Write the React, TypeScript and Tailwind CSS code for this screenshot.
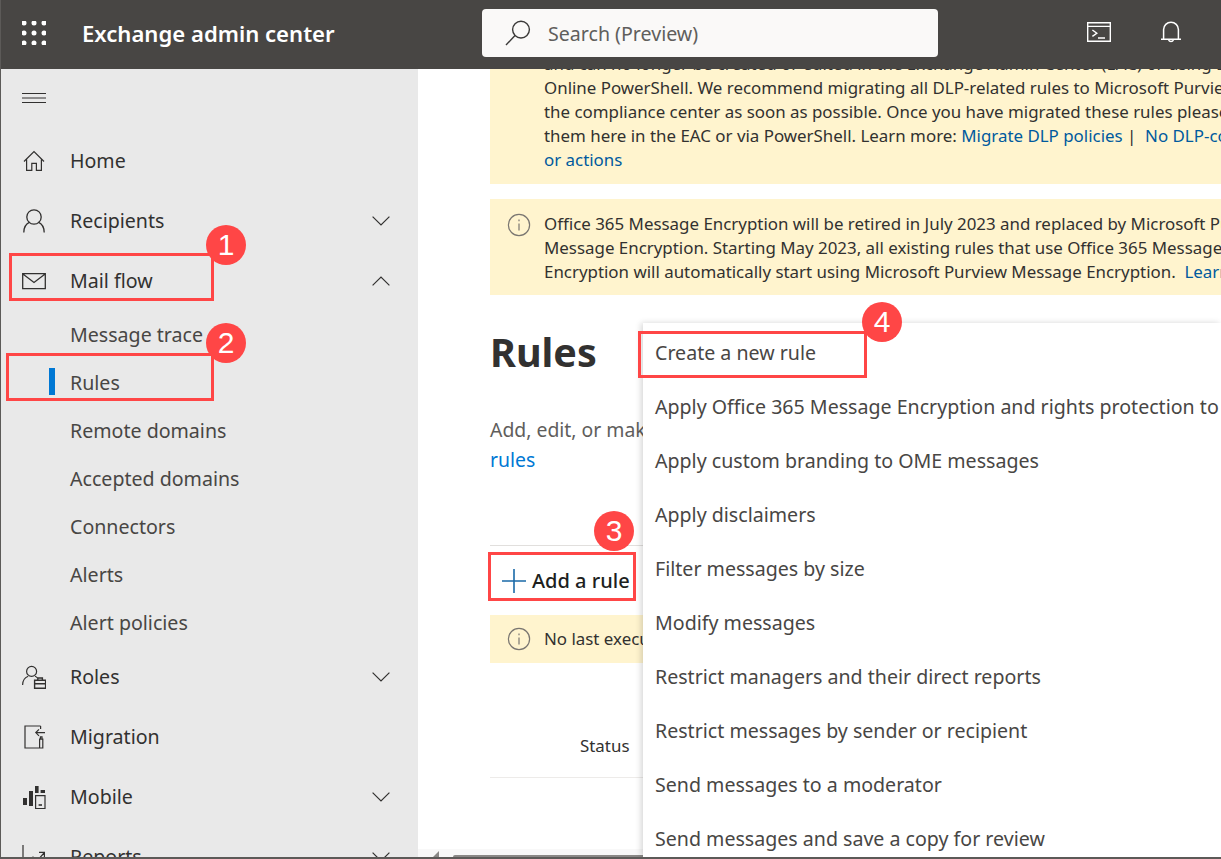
import { ReactNode } from "react";

const ink = "#323130";

// sidebar icons, drawn on a 24 box to match the fluent glyphs
const HomeIcon = () => (
  <svg width="24" height="24" viewBox="0 0 24 24" fill="none" stroke={ink} strokeWidth="1.2">
    <path d="M2 12.5 12 2.6l10 9.9M4.6 10.5V21.4h5.2v-7h4.6v7h5V10.5" />
  </svg>
);
const PersonIcon = () => (
  <svg width="24" height="24" viewBox="0 0 24 24" fill="none" stroke={ink} strokeWidth="1.3">
    <circle cx="12" cy="8" r="7.2" />
    <path d="M1.8 23.6c0-5.6 2.8-9 6-10.4M22.2 23.6c0-5.6-2.8-9-6-10.4" />
  </svg>
);
const MailIcon = () => (
  <svg width="24" height="24" viewBox="0 0 24 24" fill="none" stroke={ink} strokeWidth="1.3">
    <path d="M.7 4.6h22.6v15H.7zM.9 4.9 12 13.4l11.1-8.5" />
  </svg>
);
const RolesIcon = () => (
  <svg width="24" height="24" viewBox="0 0 24 24" fill="none" stroke={ink} strokeWidth="1.2">
    <circle cx="9.6" cy="6.4" r="5" />
    <path d="M.6 20c0-4.6 2.6-7.6 5.6-8.8M13 11.2c1 .4 1.8 1 2.4 1.6" />
    <path d="M12.6 15.2h11v8h-11zM12.6 18.8h11M15.8 15v-2h4.6v2" strokeWidth="1.4" />
  </svg>
);
const MigrationIcon = () => (
  <svg width="24" height="24" viewBox="0 0 24 24" fill="none" stroke={ink} strokeWidth="1.2">
    <path d="M18.6 1H3v22h14" />
    <path d="M18.6 1v3M23 7.6h-9.2M17 4.4l-3.2 3.2L17 10.8" />
    <path d="M18.4 14.2v-2.4h1.6v2.4M17.6 14.2h3.2V23h-3.2z" />
  </svg>
);
const MobileIcon = () => (
  <svg width="24" height="24" viewBox="0 0 24 24" fill="none" stroke={ink} strokeWidth="1.2">
    <path d="M1 13h4v7H1zM7 6h4v15H7zM13 1h3.6v7H13zM18.6 5H23v3h-4.4z" fill={ink} stroke="none" />
    <path d="M13.6 10.6h9.4v13h-9.4z" />
    <path d="M16.6 20h3.4" strokeWidth="1.6" />
  </svg>
);
const ReportsIcon = () => (
  <svg width="24" height="24" viewBox="0 0 24 24" fill="none" stroke={ink} strokeWidth="1.2">
    <path d="M1 0v24h22M5 18l6-6 4 4 7-8M17 7.4h5.4v5.4" />
  </svg>
);
const Chevron = ({ up }: { up?: boolean }) => (
  <svg width="18" height="10" viewBox="0 0 18 10" fill="none" stroke={ink} strokeWidth="1.2">
    <path d={up ? "M.6 9.4 9 1l8.4 8.4" : "M.6.6 9 9 17.4.6"} />
  </svg>
);
const InfoIcon = () => (
  <svg width="24" height="24" viewBox="0 0 24 24" fill="none" stroke="#7a7671" strokeWidth="1.2">
    <circle cx="12" cy="12" r="10.6" />
    <path d="M12 10.4v7M12 6.6v1.6" />
  </svg>
);

const Waffle = () => (
  <svg width="24" height="24" viewBox="0 0 24 24" fill="#fff">
    {[2, 12, 22].flatMap((y) =>
      [2, 12, 22].map((x) => <circle key={`${x}-${y}`} cx={x} cy={y} r="2.5" />)
    )}
  </svg>
);

const NavRow = ({ icon, label, chevron }: { icon: ReactNode; label: string; chevron?: "up" | "down" }) => (
  <div className="flex h-[60px] items-center pl-[21px] pr-[28px]">
    <span className="flex w-[48px] shrink-0">{icon}</span>
    <span className="flex-1">{label}</span>
    {chevron && <Chevron up={chevron === "up"} />}
  </div>
);

const SubRow = ({ label, active }: { label: string; active?: boolean }) => (
  <div className="relative flex h-12 items-center pl-[69px] text-[#484644]">
    {active && <span className="absolute left-[48px] top-[9px] h-[27px] w-[6px] bg-[#0078d4]" />}
    {label}
  </div>
);

const Banner = ({ children, className }: { children: ReactNode; className: string }) => (
  <div className={`flex w-[900px] shrink-0 bg-[#fff4ce] pl-[17px] text-[#323130] ${className}`}>
    <span className="mt-px w-[37px] shrink-0">
      <InfoIcon />
    </span>
    <div className="flex-1">{children}</div>
  </div>
);

const Callout = ({ n, className }: { n: number; className: string }) => (
  <div className={`absolute z-30 flex h-10 w-10 items-center justify-center rounded-full bg-[#ff4646] font-["Liberation_Sans",sans-serif] text-[30px] leading-none text-white ${className}`}>
    {n}
  </div>
);

const menuItems = [
  "Create a new rule",
  "Apply Office 365 Message Encryption and rights protection to messages",
  "Apply custom branding to OME messages",
  "Apply disclaimers",
  "Filter messages by size",
  "Modify messages",
  "Restrict managers and their direct reports",
  "Restrict messages by sender or recipient",
  "Send messages to a moderator",
  "Send messages and save a copy for review",
];

export default function App() {
  return (
    <div className="relative flex h-[859px] w-[1221px] flex-col overflow-hidden border-b-2 border-l border-[#5c5a58] bg-white font-['Noto_Sans',sans-serif] text-[19.6px]">
      <header className="relative z-10 flex h-[69px] shrink-0 items-center bg-[#484644] text-white">
        <div className="mb-[3px] ml-[21px]">
          <Waffle />
        </div>
        <div className="mb-[2px] ml-[36px] w-[400px] text-[22.1px] font-semibold">Exchange admin center</div>
        <div className="mb-[4px] flex h-[48px] w-[456px] items-center rounded bg-[#faf9f8] pl-[23px] text-[#605e5c]">
          <svg width="26" height="26" viewBox="0 0 26 26" fill="none" stroke="#3b3a39" strokeWidth="1.4">
            <circle cx="16" cy="9.6" r="8.4" />
            <path d="M10 15.6 1 25" />
          </svg>
          <span className="ml-[17px] pt-[2px]">Search (Preview)</span>
        </div>
        <div className="mb-[6px] ml-[149px] flex">
          <svg width="24" height="20" viewBox="0 0 24 20" fill="none" stroke="#fff" strokeWidth="1.4">
            <path d="M.7.7h22.6v18.6H.7zM.7 4.4h22.6M5.4 8l4.4 3.2-4.4 3.2M11 16h7" />
          </svg>
        </div>
        <div className="mb-[5px] ml-[50px] flex">
          <svg width="20" height="22" viewBox="0 0 20 22" fill="none" stroke="#fff" strokeWidth="1.5">
            <path d="M2.6 18V8.6a7.4 7.4 0 0 1 14.8 0V18M0 18.2h20M7.6 19a2.6 2.6 0 0 0 4.8 0" />
          </svg>
        </div>
      </header>

      <div className="flex min-h-0 flex-1">
        <nav className="w-[417px] shrink-0 bg-[#e9e9e9] text-[#323130]">
          <div className="flex h-[62px] items-center pb-[4px] pl-[21px]">
            <svg width="24" height="12" viewBox="0 0 24 12" fill="none" stroke={ink} strokeWidth="1">
              <path d="M0 1.5h24M0 6h24M0 10.5h24" />
            </svg>
          </div>
          <NavRow icon={<HomeIcon />} label="Home" />
          <NavRow icon={<PersonIcon />} label="Recipients" chevron="down" />
          <NavRow icon={<MailIcon />} label="Mail flow" chevron="up" />
          <div>
            <SubRow label="Message trace" />
            <SubRow label="Rules" active />
            <SubRow label="Remote domains" />
            <SubRow label="Accepted domains" />
            <SubRow label="Connectors" />
            <SubRow label="Alerts" />
            <SubRow label="Alert policies" />
          </div>
          <NavRow icon={<RolesIcon />} label="Roles" chevron="down" />
          <NavRow icon={<MigrationIcon />} label="Migration" />
          <NavRow icon={<MobileIcon />} label="Mobile" chevron="down" />
          <NavRow icon={<ReportsIcon />} label="Reports" chevron="down" />
        </nav>

        <main className="relative min-w-0 flex-1 overflow-hidden pl-[72px] text-[16.9px] leading-6">
          <Banner className="-mt-[53px] pb-3">
            <div className="pt-9">
              <p className="whitespace-nowrap">and can no longer be created or edited in the Exchange Admin Center (EAC) or using Exchange</p>
              <p className="whitespace-nowrap">Online PowerShell. We recommend migrating all DLP-related rules to Microsoft Purview</p>
              <p className="whitespace-nowrap">the compliance center as soon as possible. Once you have migrated these rules please delete</p>
              <p className="whitespace-nowrap">
                them here in the EAC or via PowerShell. Learn more: <span className="text-[#005a9e]">Migrate DLP policies</span> |&nbsp;&nbsp;
                <span className="text-[#005a9e]">No DLP-compliance</span>
              </p>
              <p className="text-[#005a9e]">or actions</p>
            </div>
          </Banner>
          <Banner className="mt-[15px] pb-[11px] pt-[13px]">
            <p className="whitespace-nowrap">Office 365 Message Encryption will be retired in July 2023 and replaced by Microsoft Purview</p>
            <p className="whitespace-nowrap">Message Encryption. Starting May 2023, all existing rules that use Office 365 Message</p>
            <p className="whitespace-nowrap">
              Encryption will automatically start using Microsoft Purview Message Encryption.&nbsp; <span className="text-[#005a9e]">Learn more</span>
            </p>
          </Banner>

          <h1 className="mt-[27px] h-[60px] text-[39.5px] font-bold leading-[60px] text-[#323130]">Rules</h1>
          <p className="mt-[33px] w-[620px] text-[19.4px] leading-[30px] text-[#605e5c]">
            Add, edit, or make changes to the mail flow
            <br />
            <span className="text-[#0078d4]">rules</span>
          </p>

          <div className="mt-[70px] flex h-[70px] w-[900px] items-center border-t border-[#e1dfdd] pl-[11px] pt-px text-[20px] font-medium text-[#201f1e]">
            <svg width="26" height="26" viewBox="0 0 26 26" fill="none" stroke="#1a6aa8" strokeWidth="1.6">
              <path d="M13 1v24M1 13h24" />
            </svg>
            <span className="ml-[5px]">Add a rule</span>
          </div>
          <div className="flex h-[48px] w-[900px] items-center bg-[#fff4ce] pl-[17px] text-[#323130]">
            <span className="w-[37px] shrink-0">
              <InfoIcon />
            </span>
            No last execution
          </div>
          <div className="flex h-[115px] w-[900px] items-center border-b border-[#edebe9] pl-[90px] pt-[52px] text-[#323130]">Status</div>

          {/* horizontal scrollbar along the bottom of the content pane */}
          <div className="absolute inset-x-0 bottom-0 h-[8px] bg-[#f8f8f8]">
            <svg className="absolute bottom-0 left-[15px]" width="6" height="6" viewBox="0 0 6 6" fill="#8a8886">
              <path d="M0 6 6 0v6z" />
            </svg>
            <div className="absolute bottom-0 left-[35px] h-[2px] w-[230px] rounded-t-sm bg-[#8a8886]" />
          </div>
        </main>
      </div>

      {/* dropdown opened from Add a rule */}
      <div className="absolute bottom-0 left-[642px] right-0 top-[323px] z-20 flex flex-col bg-white pl-[12px] pt-[3px] text-[#484644] shadow-[-2px_0_6px_rgba(0,0,0,0.16)]">
        {menuItems.map((item) => (
          <div key={item} className="flex h-[54px] shrink-0 items-center whitespace-nowrap">
            {item}
          </div>
        ))}
      </div>

      {/* red annotations laid over the screenshot */}
      <div className="absolute left-[8px] top-[253px] z-30 h-[48px] w-[205px] border-[3px] border-[#ff4646]" />
      <div className="absolute left-[5px] top-[353px] z-30 h-[48px] w-[208px] border-[3px] border-[#ff4646]" />
      <div className="absolute left-[487px] top-[552px] z-30 h-[49px] w-[148px] border-[3px] border-[#ff4646]" />
      <div className="absolute left-[637px] top-[331px] z-30 h-[47px] w-[229px] border-[3px] border-[#ff4646]" />
      <Callout n={1} className="left-[205px] top-[225px]" />
      <Callout n={2} className="left-[205px] top-[323px]" />
      <Callout n={3} className="left-[593px] top-[511px]" />
      <Callout n={4} className="left-[861px] top-[302px]" />
    </div>
  );
}
